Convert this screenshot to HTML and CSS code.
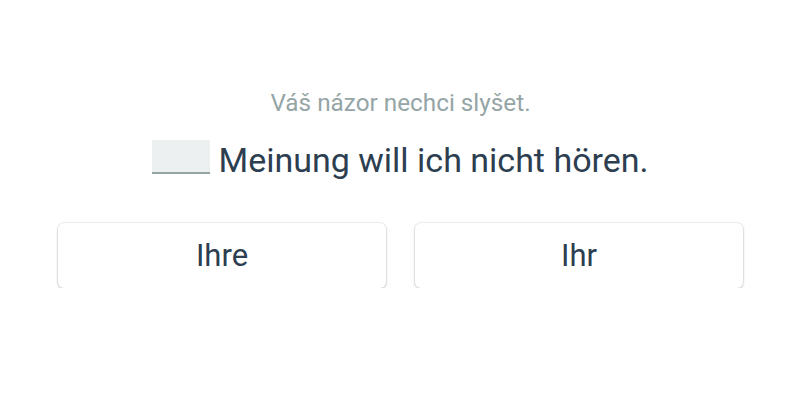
FILE: index.html
```html
<!DOCTYPE html>
<html lang="cs">
<head>
  <meta charset="UTF-8">
  <meta name="viewport" content="width=device-width, initial-scale=1.0">
  <title>Doplňte slovo</title>
  <link rel="stylesheet" href="styles.css">
</head>
<body>
  <div class="exercise">
    <p class="hint">Váš názor nechci slyšet.</p>
    <p class="sentence"><span class="blank"></span> Meinung will ich nicht hören.</p>

    <div class="choices">
      <button class="choice">Ihre</button>
      <button class="choice">Ihr</button>
    </div>
  </div>
</body>
</html>
```

FILE: styles.css
```css
body {
  font-family: Roboto, "Noto Sans", sans-serif;
  margin: 0;
  padding: 0;
  background-color: #fff;
  color: #2c3e50;
}
.exercise {
  width: 685px;
  margin: 0 auto;
  padding: 89px 0 0 1px;
  text-align: center;
}
.hint {
  margin: 0;
  font-size: 24.3px;
  line-height: 28px;
  color: #95a5a6;
}
.sentence {
  margin: 23px 0 0;
  font-size: 34px;
  line-height: 40px;
  display: flex;
  justify-content: center;
  align-items: flex-start;
  gap: 8px;
}
.blank {
  display: inline-block;
  width: 58px;
  height: 32px;
  background-color: #ecf0f1;
  border-bottom: 2px solid #95a5a6;
}
.choices {
  display: grid;
  grid-template-columns: 1fr 1fr;
  gap: 29px;
  margin-top: 43px;
}
.choice {
  height: 65px;
  font-family: inherit;
  font-size: 31px;
  color: #2c3e50;
  background-color: #fff;
  border: none;
  border-radius: 6px;
  box-shadow: 0 0 0 1px rgba(0, 0, 0, 0.05), 0 1px 3px rgba(0, 0, 0, 0.2);
  cursor: pointer;
}
.choice:hover {
  background-color: #f7f9fa;
}
```
